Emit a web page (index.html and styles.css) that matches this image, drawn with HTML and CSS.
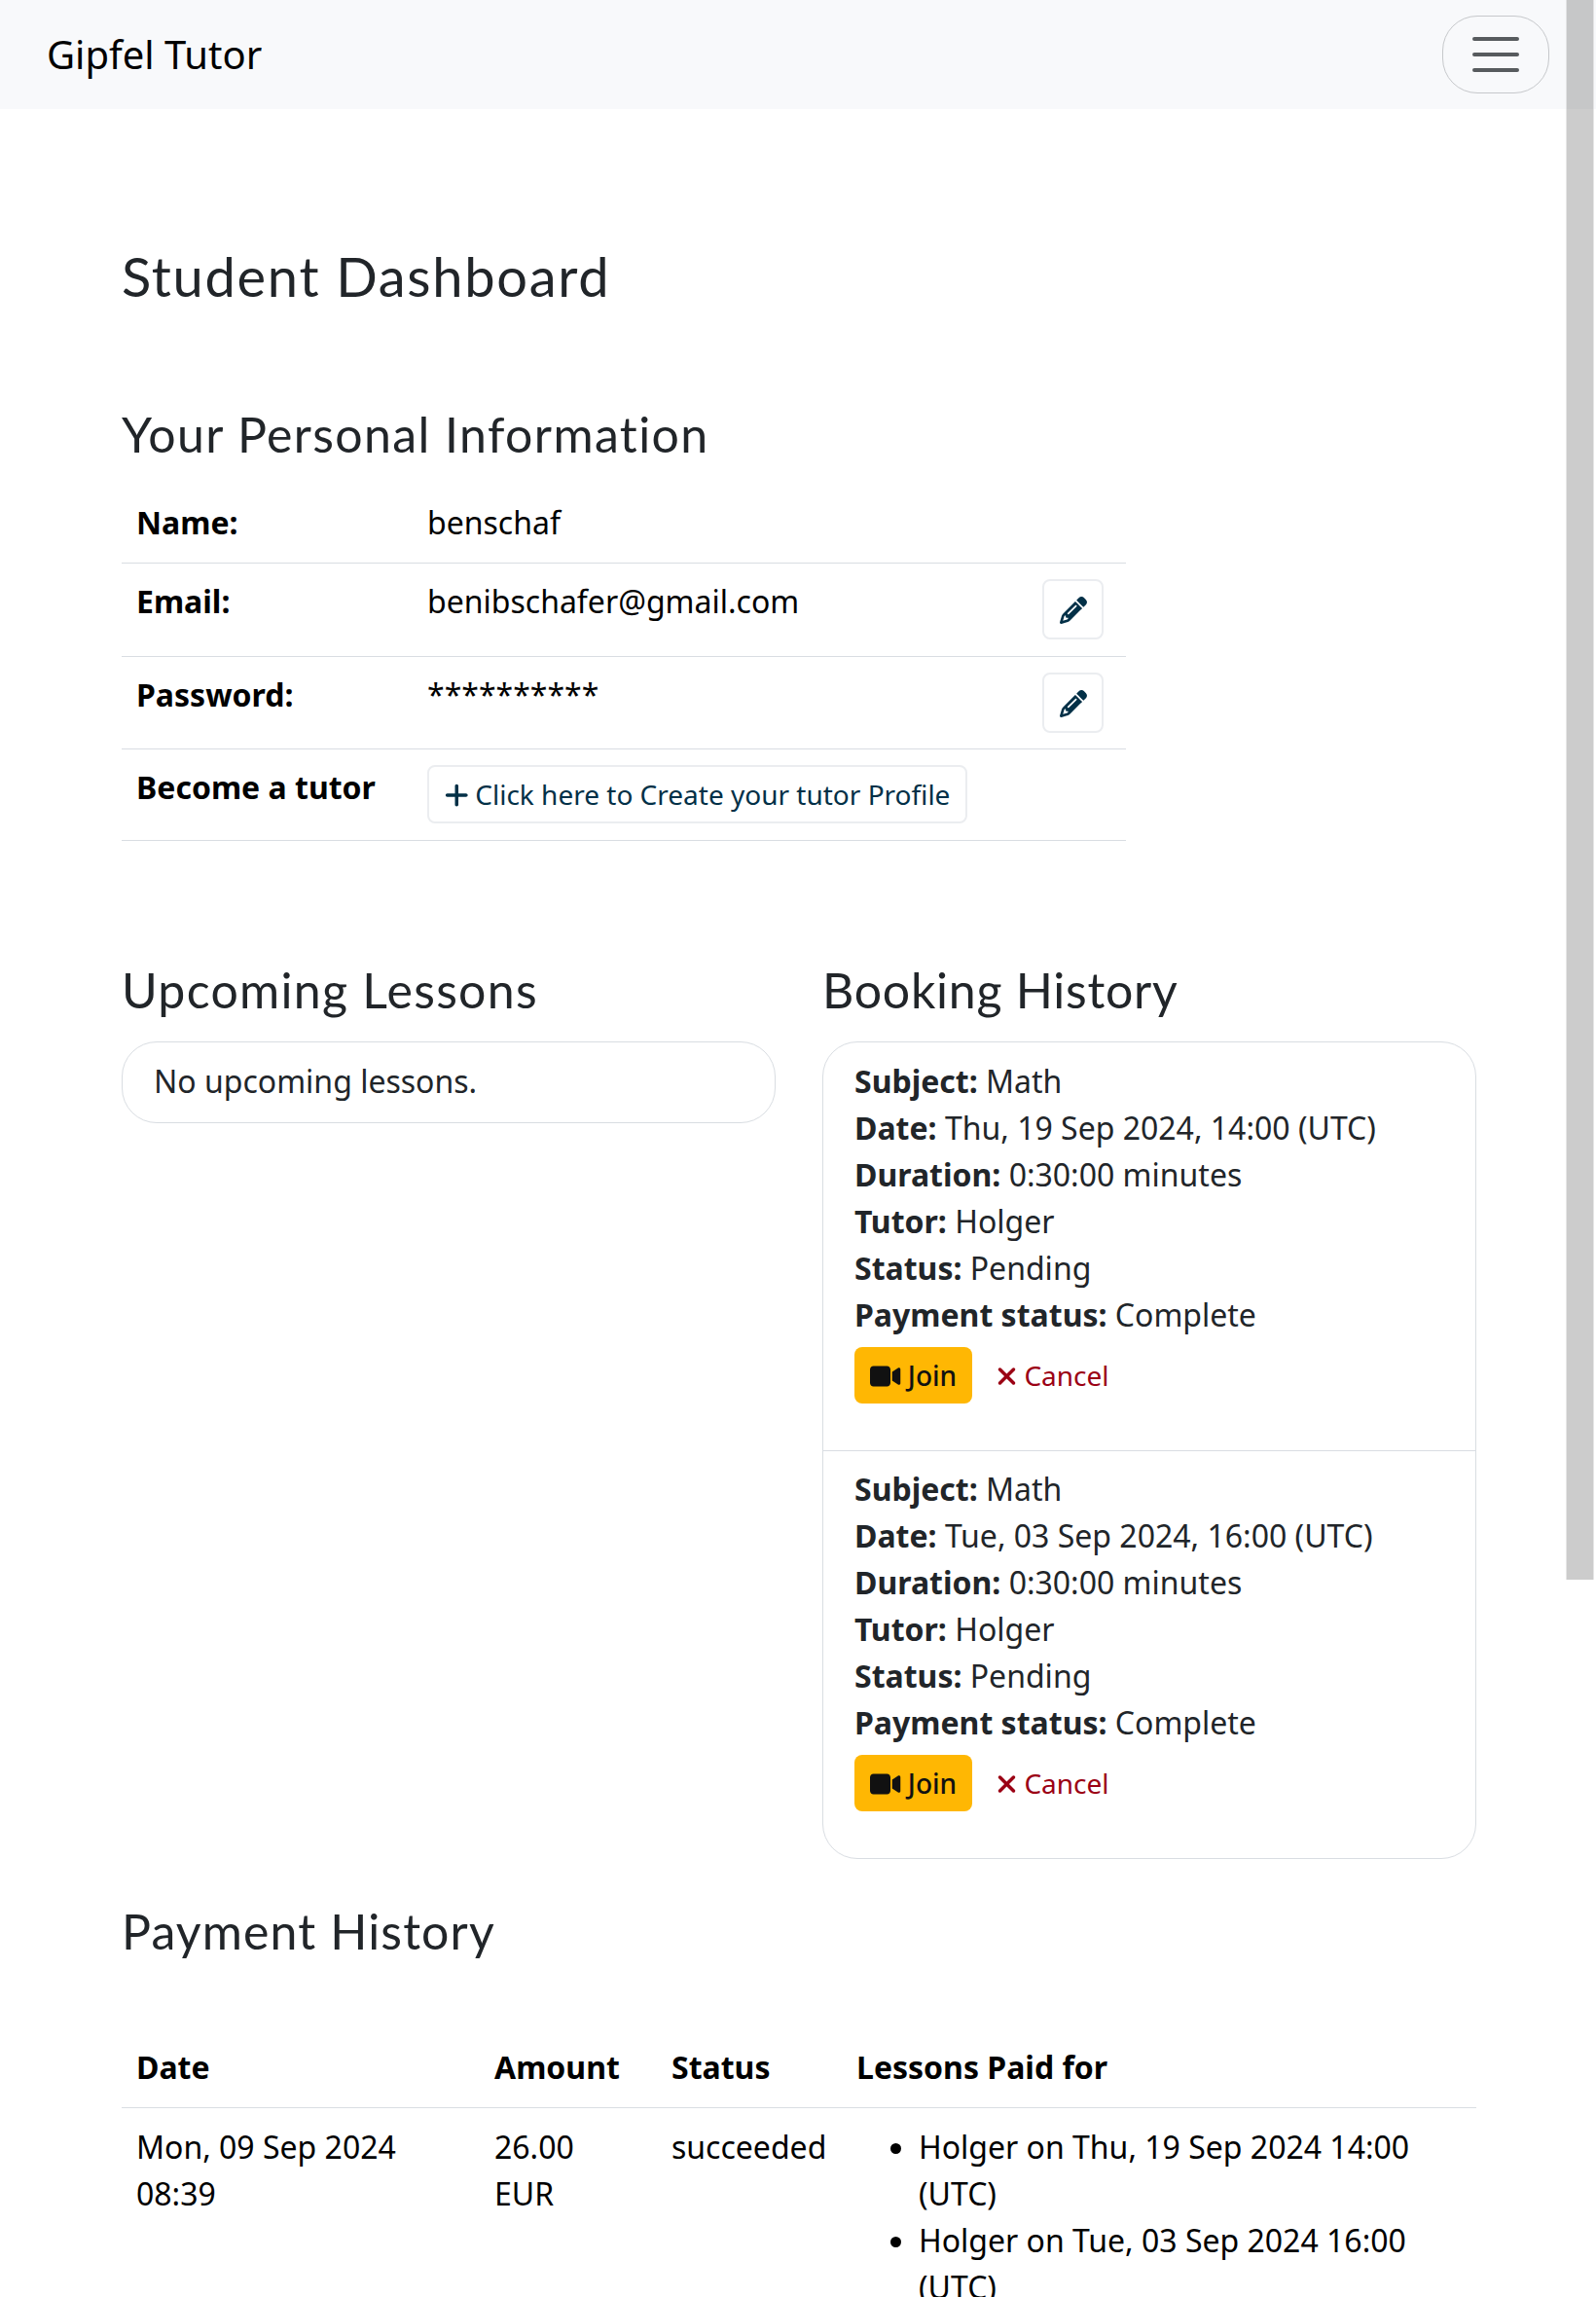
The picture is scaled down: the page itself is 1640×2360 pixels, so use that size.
FILE: index.html
```html
<!DOCTYPE html>
<html lang="en">
<head>
<meta charset="utf-8">
<title>Gipfel Tutor</title>
<link rel="stylesheet" href="styles.css">
</head>
<body>
<svg class="sprite" aria-hidden="true">
  <symbol id="pencil" viewBox="0 0 512 512"><path d="M410.3 231l11.3-11.3-33.9-33.9-62.1-62.1L291.7 89.8l-11.3 11.3-22.6 22.6L58.6 322.9c-10.4 10.4-18 23.3-22.2 37.4L1 480.7c-2.5 8.4-.2 17.5 6.1 23.7s15.3 8.5 23.7 6.1l120.3-35.4c14.1-4.2 27-11.8 37.4-22.2L387.7 253.7 410.3 231zM160 399.4l-9.1 22.7c-4 3.1-8.5 5.4-13.3 6.9L59.4 452l23-78.1c1.4-4.9 3.8-9.4 6.9-13.3l22.7-9.1v32c0 8.8 7.2 16 16 16h32zM362.7 18.7L348.3 33.2 325.7 55.8 314.3 67.1l33.9 33.9 62.1 62.1 33.9 33.9 11.3-11.3 22.6-22.6 14.5-14.5c25-25 25-65.5 0-90.5L453.3 18.7c-25-25-65.5-25-90.5 0zm-47.4 168l-144 144c-6.2 6.2-16.4 6.2-22.6 0s-6.2-16.4 0-22.6l144-144c6.2-6.2 16.4-6.2 22.6 0s6.2 16.4 0 22.6z"/></symbol>
  <symbol id="video" viewBox="0 0 576 512"><path d="M0 128C0 92.7 28.7 64 64 64H320c35.3 0 64 28.7 64 64V384c0 35.3-28.7 64-64 64H64c-35.3 0-64-28.7-64-64V128zM559.1 99.8c10.4 5.6 16.9 16.4 16.9 28.2V384c0 11.8-6.5 22.6-16.9 28.2s-23 5-32.9-1.6l-96-64L416 337.1V320 192 174.9l14.2-9.5 96-64c9.8-6.5 22.4-7.2 32.9-1.6z"/></symbol>
  <symbol id="xmark" viewBox="0 0 384 512"><path d="M342.6 150.6c12.5-12.5 12.5-32.8 0-45.3s-32.8-12.5-45.3 0L192 210.7 86.6 105.4c-12.5-12.5-32.8-12.5-45.3 0s-12.5 32.8 0 45.3L146.7 256 41.4 361.4c-12.5 12.5-12.5 32.8 0 45.3s32.8 12.5 45.3 0L192 301.3 297.4 406.6c12.5 12.5 32.8 12.5 45.3 0s12.5-32.8 0-45.3L237.3 256 342.6 150.6z"/></symbol>
  <symbol id="plus" viewBox="0 0 448 512"><path d="M256 80c0-17.7-14.3-32-32-32s-32 14.3-32 32V224H48c-17.7 0-32 14.3-32 32s14.3 32 32 32H192V432c0 17.7 14.3 32 32 32s32-14.3 32-32V288H400c17.7 0 32-14.3 32-32s-14.3-32-32-32H256V80z"/></symbol>
</svg>

<nav class="navbar">
  <a class="brand">Gipfel Tutor</a>
  <button class="toggler" aria-label="Toggle navigation">
    <svg width="60" height="60" viewBox="0 0 30 30"><path d="M4 7h22M4 15h22M4 23h22"/></svg>
  </button>
</nav>

<main class="container">
  <h1 class="title">Student Dashboard</h1>

  <h2 class="heading heading-personal">Your Personal Information</h2>
  <table class="table info">
    <colgroup><col class="c-label"><col class="c-value"><col class="c-action"></colgroup>
    <tr class="r-name"><th>Name:</th><td>benschaf</td><td></td></tr>
    <tr class="r-email"><th>Email:</th><td>benibschafer@gmail.com</td><td class="edit"><a class="btn btn-light"><svg class="icon i-pencil"><use href="#pencil"/></svg></a></td></tr>
    <tr class="r-password"><th>Password:</th><td>**********</td><td class="edit"><a class="btn btn-light"><svg class="icon i-pencil"><use href="#pencil"/></svg></a></td></tr>
    <tr class="r-tutor"><th>Become a tutor</th><td class="create"><a class="btn btn-light"><svg class="icon i-plus"><use href="#plus"/></svg> Click here to Create your tutor Profile</a></td><td></td></tr>
  </table>

  <div class="columns">
    <section>
      <h2 class="heading heading-upcoming">Upcoming Lessons</h2>
      <ul class="list"><li class="item item-empty">No upcoming lessons.</li></ul>
    </section>
    <section>
      <h2 class="heading heading-booking">Booking History</h2>
      <ul class="list">
        <li class="item">
          <div><strong>Subject:</strong> Math</div>
          <div><strong>Date:</strong> Thu, 19 Sep 2024, 14:00 (UTC)</div>
          <div><strong>Duration:</strong> 0:30:00 minutes</div>
          <div><strong>Tutor:</strong> Holger</div>
          <div><strong>Status:</strong> Pending</div>
          <div><strong>Payment status:</strong> Complete</div>
          <div class="actions">
            <a class="btn btn-join"><svg class="icon i-video"><use href="#video"/></svg> Join</a>
            <a class="btn btn-cancel"><svg class="icon i-xmark"><use href="#xmark"/></svg> Cancel</a>
          </div>
        </li>
        <li class="item">
          <div><strong>Subject:</strong> Math</div>
          <div><strong>Date:</strong> Tue, 03 Sep 2024, 16:00 (UTC)</div>
          <div><strong>Duration:</strong> 0:30:00 minutes</div>
          <div><strong>Tutor:</strong> Holger</div>
          <div><strong>Status:</strong> Pending</div>
          <div><strong>Payment status:</strong> Complete</div>
          <div class="actions">
            <a class="btn btn-join"><svg class="icon i-video"><use href="#video"/></svg> Join</a>
            <a class="btn btn-cancel"><svg class="icon i-xmark"><use href="#xmark"/></svg> Cancel</a>
          </div>
        </li>
      </ul>
    </section>
  </div>

  <h2 class="heading heading-payment">Payment History</h2>
  <table class="table payments">
    <colgroup><col class="c-date"><col class="c-amount"><col class="c-status"><col class="c-lessons"></colgroup>
    <tr class="r-head"><th>Date</th><th>Amount</th><th>Status</th><th>Lessons Paid for</th></tr>
    <tr>
      <td>Mon, 09 Sep 2024<br>08:39</td>
      <td>26.00<br>EUR</td>
      <td>succeeded</td>
      <td>
        <ul class="paid">
          <li>Holger on Thu, 19 Sep 2024 14:00<br>(UTC)</li>
          <li>Holger on Tue, 03 Sep 2024 16:00<br>(UTC)</li>
        </ul>
      </td>
    </tr>
  </table>
</main>
<div class="scrollbar"></div>
</body>
</html>
```
FILE: styles.css
```css
* { box-sizing: border-box; }

html { height: 2360px; overflow: hidden; }

body {
  position: relative;
  height: 2360px;
  margin: 0;
  overflow: hidden;
  background: #fff;
  color: #212529;
  font: 400 32px/48px "Noto Sans", sans-serif;
}

.sprite { display: none; }

.navbar {
  display: flex;
  align-items: center;
  justify-content: space-between;
  height: 112px;
  padding: 0 48px;
  background: #f8f9fb;
}

.brand { padding-bottom: 1px; color: #000; font-size: 40px; line-height: 60px; }

.toggler {
  display: flex;
  align-items: center;
  justify-content: center;
  width: 110px;
  height: 80px;
  padding: 0;
  border: 1px solid #c6c8cb;
  border-radius: 36px;
  background: transparent;
}

.toggler svg {
  fill: none;
  stroke: rgba(33, 37, 41, .75);
  stroke-width: 2;
  stroke-linecap: round;
}

.container { width: 1392px; margin-left: 125px; }

.title, .heading {
  margin: 0;
  font-family: Lato, sans-serif;
  font-weight: 400;
  white-space: nowrap;
}

.title { padding-top: 138px; font-size: 56px; line-height: 68px; letter-spacing: 1.7px; }
.heading { font-size: 50px; line-height: 60px; }
.heading-personal { margin-top: 98px; margin-bottom: 21px; letter-spacing: 1.4px; }
.heading-upcoming, .heading-booking { margin-bottom: 23px; }
.heading-upcoming { letter-spacing: 1.3px; }
.heading-booking { letter-spacing: .75px; }

.table { border-collapse: separate; border-spacing: 0; table-layout: fixed; color: #000; }
.table th, .table td {
  padding: 16px 16px 0;
  border-bottom: 1px solid #d9dde2;
  text-align: left;
  vertical-align: top;
}
.table th { font-weight: 700; }
.table th:first-child, .table td:first-child { padding-left: 15px; }

.info { width: 1032px; }
.c-label { width: 298px; }
.c-value { width: 631px; }
.c-action { width: 103px; }
.r-name { height: 82px; }
.r-email { height: 96px; }
.r-password { height: 95px; }
.r-tutor { height: 94px; }
.info .r-email th, .info .r-email td,
.info .r-password th, .info .r-password td,
.info .r-tutor th { padding-top: 15px; }
.info tr .edit { padding-top: 16px; }

.btn {
  display: inline-block;
  padding: 8px 16px;
  border-radius: 8px;
  font-size: 28px;
  line-height: 42px;
  white-space: nowrap;
  vertical-align: top;
}

.btn-light { border: 2px solid #ebedf0; color: #023047; }
.edit .btn { margin-left: 1px; padding: 8px 15.5px; }
.create .btn { padding: 7px 15.5px; }

.icon { height: 28px; fill: currentColor; vertical-align: -.125em; }
.i-pencil { width: 28px; }
.i-plus { width: 24.5px; }
.i-video { width: 31.5px; }
.i-xmark { width: 21px; }

.columns {
  display: grid;
  grid-template-columns: 672px 672px;
  column-gap: 48px;
  margin-top: 123px;
}

.list {
  margin: 0;
  padding: 0;
  border: 1px solid #d9dde2;
  border-radius: 36px;
  list-style: none;
}

.item { height: 419px; padding: 16px 32px; }
.item + .item { padding-top: 15px; border-top: 1px solid #d9dde2; }
.item-empty { height: 82px; }

.actions { display: flex; gap: 9px; margin-top: 9px; }
.btn-join { background: #ffb703; color: #111; font-weight: 500; }
.btn-cancel { color: #9b0014; }

.heading-payment { margin-top: 44px; margin-bottom: 70px; letter-spacing: 1.15px; }

.payments { width: 1392px; }
.c-date { width: 367px; }
.c-amount { width: 182px; }
.c-status { width: 190px; }
.c-lessons { width: 653px; }
.r-head { height: 82px; }

.paid { margin: 0; padding-left: 64px; }

.scrollbar {
  position: absolute;
  top: 0;
  right: 2px;
  width: 29px;
  height: 1623px;
  border: solid rgba(255, 255, 255, .5);
  border-width: 0 1px;
  background: rgba(0, 0, 0, .2);
}
```
